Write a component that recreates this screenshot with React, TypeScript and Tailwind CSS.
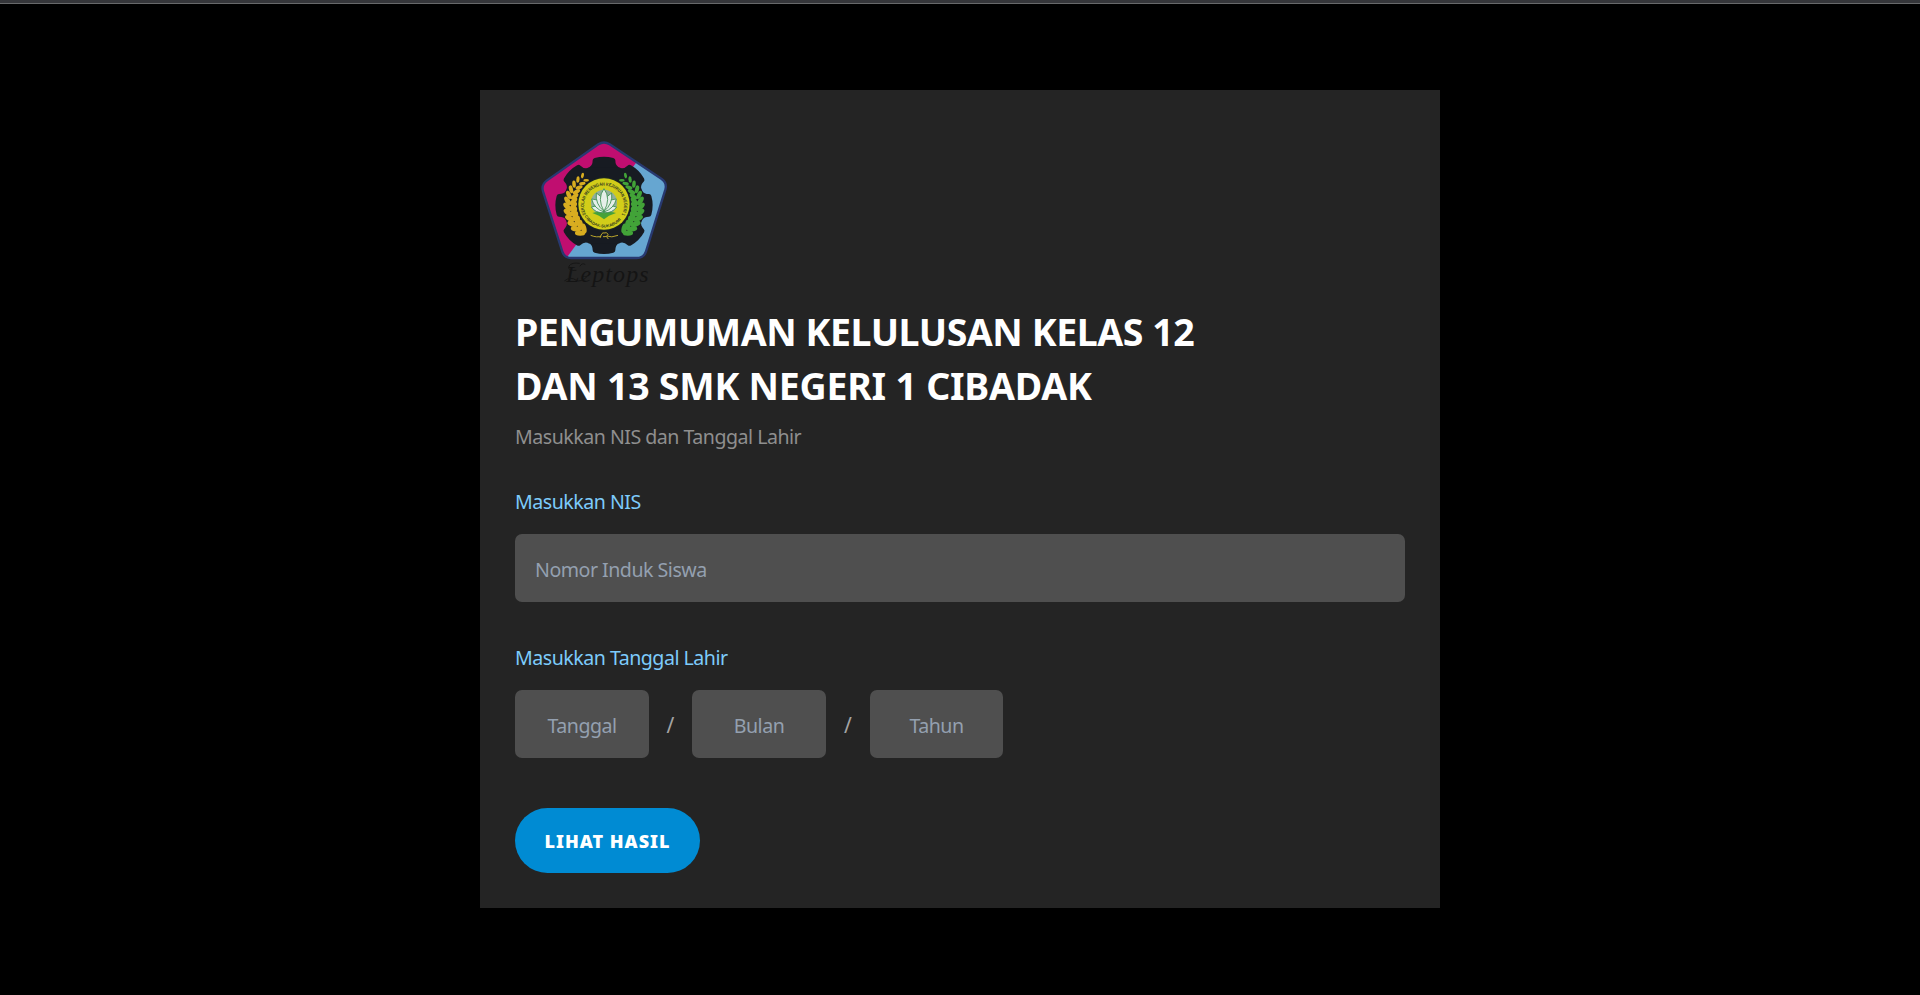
const leaves = Array.from({ length: 12 }, (_, i) => i);

function Laurel({ side, fill }: { side: 1 | -1; fill: string }) {
  return (
    <g transform={side === 1 ? "translate(444 0) scale(-1 1)" : undefined} fill={fill}>
      {leaves.map((i) => {
        const angle = 128 + i * 9.4;
        const a = (angle * Math.PI) / 180;
        const cx = 222 + 101 * Math.cos(a);
        const cy = 226 - 101 * Math.sin(a);
        const size = Math.min(15.5, 8.5 + i * 1.2);
        return (
          <g key={i} transform={`translate(${cx} ${cy}) rotate(${90 - angle})`}>
            <ellipse cx="4" cy="-9" rx={size} ry={size * 0.5} transform="rotate(-38 4 -9)" />
            <ellipse cx="4" cy="9" rx={size} ry={size * 0.5} transform="rotate(38 4 9)" />
          </g>
        );
      })}
    </g>
  );
}

function Logo() {
  return (
    <svg viewBox="0 0 450 495" className="block h-[165px] w-[150px]">
      <defs>
        <clipPath id="pentagon">
          <path d="M205 43Q222 32 239 43L394 146Q412 158 406 179L348 364Q342 384 321 384H123Q103 384 97 365L39 184Q33 164 51 151Z" />
        </clipPath>
        <path id="ringTop" d="M168 253A60 60 0 1 1 276 253" />
        <path id="ringBottom" d="M160 252A68 68 0 0 0 284 252" />
      </defs>
      <g clipPath="url(#pentagon)">
        <path d="M0 0H450V495H0Z" fill="#66a6d1" />
        <path d="M0 0H390L315 103L113 379L90 410H0Z" fill="#c00e70" />
      </g>
      <path
        d="M205 43Q222 32 239 43L394 146Q412 158 406 179L348 364Q342 384 321 384H123Q103 384 97 365L39 184Q33 164 51 151Z"
        fill="none"
        stroke="#283970"
        strokeWidth="7"
      />
      <g fill="#171b22">
        <circle cx="222" cy="226" r="123" />
        {[0, 45, 90, 135, 180, 225, 270, 315].map((r) => (
          <path
            key={r}
            d="M178 112Q188 106 188 91Q188 86 194 84Q222 76 250 84Q256 86 256 91Q256 106 266 112Z"
            transform={`rotate(${r} 222 226)`}
          />
        ))}
      </g>
      <Laurel side={-1} fill="#d8ad20" />
      <Laurel side={1} fill="#42a338" />
      <circle cx="222" cy="222" r="80" fill="#1c2822" />
      <circle cx="222" cy="222" r="77" fill="#d2cd19" />
      <circle cx="222" cy="218" r="39" fill="#8fae9c" />
      <path d="M187 249Q206 242 222 250Q239 242 258 249L237 257L222 268L207 257Z" fill="#45a238" />
      <g fill="#e5eee9" stroke="#398d4c" strokeWidth="2.5">
        <path d="M222 248Q206 222 184 231Q197 250 222 248Z" />
        <path d="M222 248Q238 222 260 231Q247 250 222 248Z" />
        <path d="M222 246Q217 207 185 207Q192 236 222 246Z" />
        <path d="M222 246Q227 207 259 207Q252 236 222 246Z" />
        <path d="M222 244Q226 204 199 189Q195 222 222 244Z" />
        <path d="M222 244Q218 204 245 189Q249 222 222 244Z" />
        <path d="M222 244Q200 206 222 176Q244 206 222 244Z" />
      </g>
      <g fill="#333b20" fontFamily="Liberation Sans, sans-serif" fontWeight="bold">
        <text fontSize="14">
          <textPath href="#ringTop" textLength="244" lengthAdjust="spacingAndGlyphs">
            SEKOLAH MENENGAH KEJURUAN NEGERI 1
          </textPath>
        </text>
        <text fontSize="12">
          <textPath href="#ringBottom" startOffset="8" textLength="128" lengthAdjust="spacingAndGlyphs">
            CIBADAK-SUKABUMI
          </textPath>
        </text>
      </g>
      <g fill="none" stroke="#b9a42c" strokeWidth="3">
        <path d="M182 316Q202 324 214 318M230 318Q244 324 264 316" />
        <path d="M210 324Q216 305 222 309Q231 305 234 313Q233 321 219 320M229 319L235 327" />
      </g>
      <text
        x="108"
        y="456"
        fontSize="72"
        fontStyle="italic"
        fontFamily="Liberation Serif, serif"
        fill="#141414"
        textLength="248"
      >
        Leptops
      </text>
      <g fill="none" stroke="#161616" strokeWidth="3" strokeLinecap="round">
        <path d="M138 421Q112 424 117 408Q126 396 148 400" />
        <path d="M165 403Q157 397 150 408M104 452Q122 438 139 451Q153 458 170 441" />
      </g>
    </svg>
  );
}

const field =
  "h-[68px] rounded-[7px] bg-[#4f4f4f] pt-0.5 text-[19.6px] tracking-[-0.5px] text-white outline-none placeholder:text-[#94a0b0] placeholder:opacity-100";

export default function App() {
  return (
    <div className="flex h-[995px] w-full flex-col bg-black font-['Noto_Sans',sans-serif]">
      <div className="h-1 shrink-0 border-b border-[#68696b] bg-[#35363a]" />
      <main className="mx-auto mt-[86px] flex h-[818px] w-[960px] flex-col items-start bg-[#242424] px-[35px] pt-10">
        <div className="ml-[15px]">
          <Logo />
        </div>
        <h1 className="mt-[10px] text-[37.5px] leading-[54px] font-bold whitespace-nowrap text-white">
          <span className="block tracking-[-0.45px]">PENGUMUMAN KELULUSAN KELAS 12</span>
          <span className="block tracking-[-0.24px]">DAN 13 SMK NEGERI 1 CIBADAK</span>
        </h1>
        <p className="mt-[9px] text-[19.6px] leading-[30px] tracking-[-0.5px] text-[#8f8f8f]">
          Masukkan NIS dan Tanggal Lahir
        </p>
        <label htmlFor="nis" className="mt-[35px] text-[19.6px] leading-[30px] tracking-[-0.5px] text-[#7dcbfb]">
          Masukkan NIS
        </label>
        <input id="nis" placeholder="Nomor Induk Siswa" className={`mt-[17px] w-full shrink-0 px-5 ${field}`} />
        <label htmlFor="tanggal" className="mt-[41px] text-[19.6px] leading-[30px] tracking-[-0.5px] text-[#7dcbfb]">
          Masukkan Tanggal Lahir
        </label>
        <div className="mt-[17px] flex items-center text-[21px] text-[#a3a3a3]">
          <input id="tanggal" placeholder="Tanggal" className={`w-[134px] text-center ${field}`} />
          <span className="w-[43px] pt-[3px] text-center">/</span>
          <input placeholder="Bulan" className={`w-[134px] text-center ${field}`} />
          <span className="w-11 pt-[3px] text-center">/</span>
          <input placeholder="Tahun" className={`w-[133px] text-center ${field}`} />
        </div>
        <button className="mt-[50px] h-[65px] w-[185px] rounded-full bg-[#008bd3] pt-0.5 text-[18px] font-black tracking-[1px] whitespace-nowrap text-white">
          LIHAT HASIL
        </button>
      </main>
    </div>
  );
}
